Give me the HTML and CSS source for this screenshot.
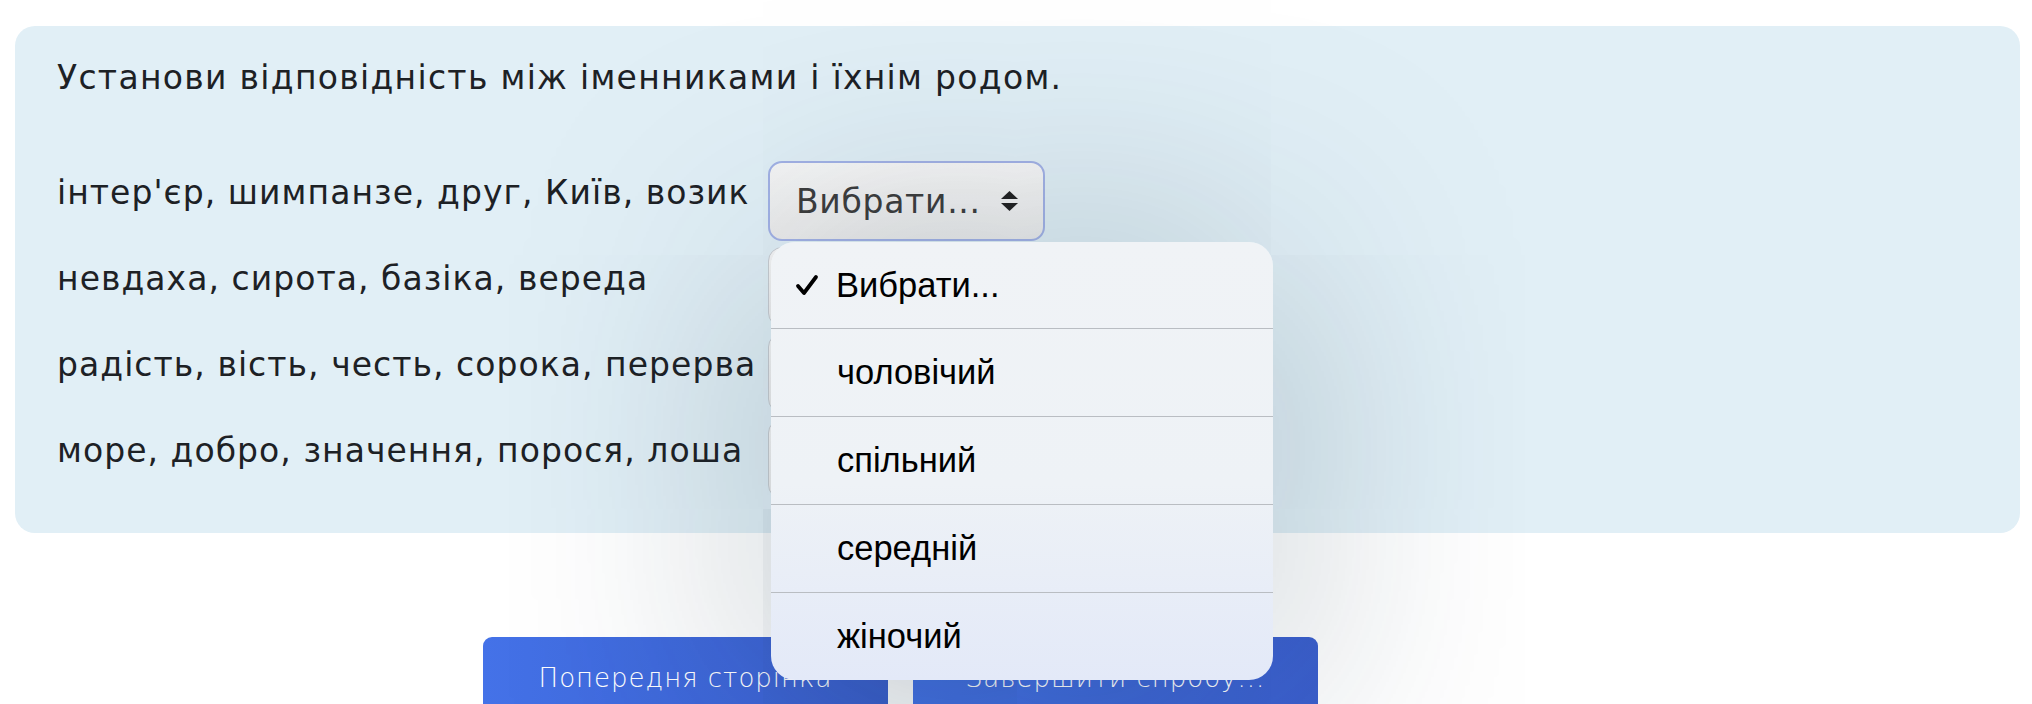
FILE: index.html
```html
<!DOCTYPE html>
<html lang="uk">
<head>
    <meta charset="UTF-8">
    <meta name="viewport" content="width=device-width, initial-scale=1.0">
    <title>Тест</title>
    <link rel="stylesheet" href="styles.css">
</head>
<body>
    <div class="que">
        <div class="qtext">Установи відповідність між іменниками і їхнім родом.</div>
        <div class="answer">
            <div class="label">інтер'єр, шимпанзе, друг, Київ, возик</div>
            <div class="control">
                <div class="select focused">
                    <span>Вибрати...</span>
                    <svg class="arrows" width="17" height="20" viewBox="0 0 17 20"><polygon points="0,8 8.5,0 17,8" /><polygon points="0,12 8.5,20 17,12" /></svg>
                </div>
                <div class="picker">
                    <div class="option"><svg class="tick" width="26" height="26" viewBox="0 0 26 26"><path d="M4 14 L10 21 L22 5" /></svg>Вибрати...</div>
                    <div class="option">чоловічий</div>
                    <div class="option">спільний</div>
                    <div class="option">середній</div>
                    <div class="option">жіночий</div>
                </div>
            </div>

            <div class="label">невдаха, сирота, базіка, вереда</div>
            <div class="control">
                <div class="select"><span>Вибрати...</span></div>
            </div>

            <div class="label">радість, вість, честь, сорока, перерва</div>
            <div class="control">
                <div class="select"><span>Вибрати...</span></div>
            </div>

            <div class="label">море, добро, значення, порося, лоша</div>
            <div class="control">
                <div class="select"><span>Вибрати...</span></div>
            </div>
        </div>
    </div>

    <div class="nav">
        <button class="btn">Попередня сторінка</button>
        <button class="btn">Завершити спробу...</button>
    </div>
</body>
</html>
```

FILE: styles.css
```css
body {
    margin: 0;
    background-color: white;
    color: #1d2125;
    font-family: "DejaVu Sans", sans-serif;
    overflow: hidden;
}
.que {
    margin: 26px 12px 0 15px;
    padding: 32px 42px 28px 42px;
    background-color: #e1eff6;
    border-radius: 20px;
}
.qtext {
    font-size: 33px;
    line-height: 40px;
    letter-spacing: 1.3px;
}
.answer {
    display: grid;
    grid-template-columns: 711px 277px;
    grid-auto-rows: 86px;
    margin-top: 63px;
}
.label {
    font-size: 33px;
    line-height: 40px;
    letter-spacing: 1.05px;
    padding-top: 12px;
}
.control {
    position: relative;
}
.select {
    display: flex;
    align-items: center;
    justify-content: space-between;
    box-sizing: border-box;
    height: 80px;
    padding: 0 25px 0 26px;
    background: linear-gradient(#f7f7f7, #ececec);
    border: 1px solid #c9cdd2;
    border-radius: 14px;
    font-size: 33px;
    letter-spacing: 0.7px;
    color: #3d3d3d;
}
.select.focused {
    border: 2px solid #a3b2e6;
}
.arrows polygon {
    fill: #222;
}
.picker {
    position: absolute;
    top: 81px;
    left: 3px;
    width: 502px;
    height: 438px;
    z-index: 2;
    border-radius: 24px;
    background: linear-gradient(#f0f3f6, #eef2f6 55%, #e3e9f8);
    box-shadow: 0 20px 260px rgba(20, 50, 70, 0.35);
    overflow: hidden;
    font-family: "Liberation Sans", Arial, sans-serif;
    font-size: 34.5px;
    color: black;
}
.option {
    display: flex;
    align-items: center;
    height: 88px;
    padding-left: 66px;
    border-top: 1.5px solid #b9bdc2;
    box-sizing: border-box;
}
.option:first-child {
    height: 86px;
    border-top: none;
    padding-left: 23px;
}
.tick {
    margin-right: 16px;
}
.tick path {
    fill: none;
    stroke: black;
    stroke-width: 3.8;
    stroke-linecap: round;
    stroke-linejoin: round;
}
.nav {
    display: flex;
    gap: 25px;
    margin-top: 104px;
    padding-left: 483px;
}
.btn {
    width: 405px;
    height: 100px;
    padding: 0 0 18px 0;
    border: none;
    border-radius: 9px;
    background: linear-gradient(90deg, #4472e8, #3b5fce);
    color: white;
    font-family: "DejaVu Sans", sans-serif;
    font-size: 26px;
    font-weight: 300;
    letter-spacing: 1px;
}
```
